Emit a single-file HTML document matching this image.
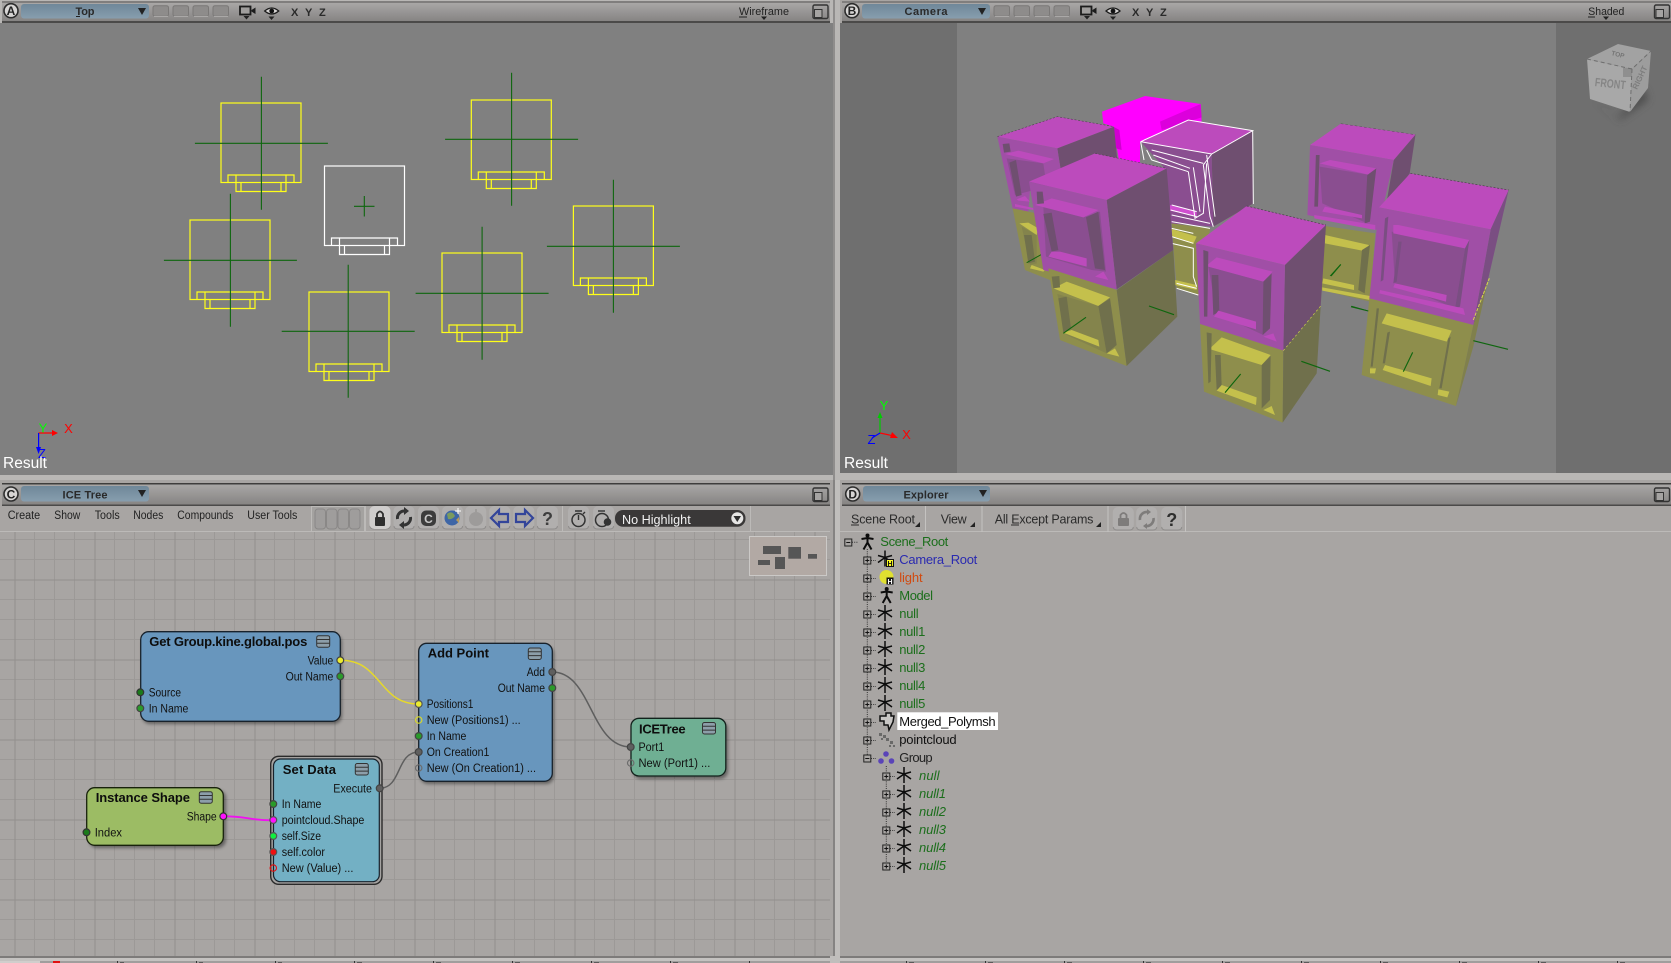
<!DOCTYPE html>
<html><head><meta charset="utf-8"><title>ICE Tree</title>
<style>
html,body{margin:0;padding:0;background:#a8a5a3;overflow:hidden}
svg{display:block}
text{font-family:"Liberation Sans",sans-serif}
.l{font-size:11.5px;fill:#111}
.t{font-size:13px;font-weight:bold;fill:#0d0d0d}
.m{font-size:11.5px;fill:#222}
.b{font-size:11px;font-weight:bold;fill:#2a2a2a}
.e{font-size:12.5px;fill:#2b2b2b}
.tr{font-size:13px}
.g{fill:#1c6e1c}
.i{fill:#1c6e1c;font-style:italic}
.w{stroke:#ffff19;fill:none;stroke-width:1.2}
.wh{stroke:#fff;fill:none;stroke-width:1.2}
.c{stroke:#0e660e;stroke-width:1.1;fill:none}
</style></head><body>
<svg width="1671" height="963" viewBox="0 0 1671 963" xmlns="http://www.w3.org/2000/svg">
<defs>
<linearGradient id="bar" x1="0" y1="0" x2="0" y2="1"><stop offset="0" stop-color="#a9a7a6"/><stop offset="1" stop-color="#868483"/></linearGradient>
<linearGradient id="dd" x1="0" y1="0" x2="0" y2="1"><stop offset="0" stop-color="#6f8799"/><stop offset="1" stop-color="#879eae"/></linearGradient>
<pattern id="grid" patternUnits="userSpaceOnUse" x="14.5" y="19.5" width="80" height="80">
<path d="M0 0V80M20 0V80M40 0V80M60 0V80M0 0H80M0 20H80M0 40H80M0 60H80" stroke="#9c9997" stroke-width="1" fill="none"/>
<path d="M.5 0V80M0 .5H80" stroke="#92908e" stroke-width="1" fill="none"/>
</pattern>
<filter id="sh" x="-10%" y="-10%" width="125%" height="125%"><feGaussianBlur stdDeviation="1.5"/></filter>
<filter id="sh2" x="-40%" y="-40%" width="180%" height="180%"><feGaussianBlur stdDeviation="4"/></filter>

<g id="obj" class="w">
<rect x="-40" y="-40" width="80" height="79.5"/>
<path d="M-33 39.5V32H33V39.5M-25 32V48.5H25V32M-20 39.5V48.5M20 39.5V48.5"/>
</g>
<g id="objw" class="wh">
<rect x="-40" y="-40" width="80" height="79.5"/>
<path d="M-33 39.5V32H33V39.5M-25 32V48.5H25V32M-20 39.5V48.5M20 39.5V48.5"/>
</g>
<path id="cross" class="c" d="M0-66.5V66.5M-66.5 0H66.5"/>
<g id="plus"><rect x="-3.5" y="-3.5" width="7" height="7" fill="#a8a5a3" stroke="#222"/><path d="M-2-.0H2M0-2V2" stroke="#111"/></g>
<g id="minus"><rect x="-3.5" y="-3.5" width="7" height="7" fill="#a8a5a3" stroke="#222"/><path d="M-2 0H2" stroke="#111"/></g>
<path id="null" d="M0-8V8M-7 4L0-1L7 4M-7-3L0-1L7-3" stroke="#0c0c0c" stroke-width="1.5" fill="none"/>
<g id="fig"><circle cx="0" cy="-6" r="2" fill="#0c0c0c"/><path d="M0-6V1L-4 8M0 1L4 8M-6-2.5L0-3.5L6-2.5" stroke="#0c0c0c" stroke-width="2" fill="none"/></g>
<g id="menu"><rect x="0" y="0" width="13" height="11.5" rx="2" fill="#8c9ea9" stroke="#333" stroke-width="1"/><path d="M0 3.8H13M0 7.6H13" stroke="#333"/></g>
<g id="slot"><rect x="0" y="0" width="15.5" height="10.5" rx="2" fill="#8e8c8b" stroke="#7a7877"/><path d="M1 10.8H15" stroke="#aaa8a7"/></g>
<g id="max"><rect x="0" y="0" width="15" height="13.5" rx="1.5" fill="none" stroke="#333" stroke-width="1.4"/><rect x="1.5" y="4.5" width="7.5" height="8" fill="#a5a3a2" stroke="#333"/></g>
<g id="cam"><rect x="0" y="0" width="10.5" height="8" fill="#a09e9d" stroke="#1c1c1c" stroke-width="1.8"/><path d="M11.5 3.5L15.5 1V7.5L11.5 5Z" fill="#1c1c1c"/></g>
<g id="eye"><path d="M-7 0Q0-6 7 0Q0 6-7 0Z" fill="#d5d3d2" stroke="#1c1c1c" stroke-width="1.3"/><circle r="2.4" fill="#111"/></g>
<path id="tri" d="M-3 0H3L0 3.5Z" fill="#222"/>
<path id="ddtri" d="M-4 0H4L0 7Z" fill="#222"/>
<g id="tbtn"><rect x="-10.5" y="-12" width="21" height="23" rx="5" fill="#b1afae"/><path d="M-10 8Q-10 11-6 11H6Q10 11 10 8" stroke="#8f8d8c" fill="none"/></g>
</defs>

<rect width="1671" height="963" fill="#a8a5a3"/>

<!-- VIEWPORT A -->
<rect x="0" y="0" width="840" height="480" fill="#b9b7b5"/>
<rect x="0" y="23" width="833" height="452" fill="#808080"/>
<rect x="833" y="0" width="2" height="480" fill="#8f8d8c"/>
<rect x="2" y="1" width="828" height="2" fill="#807e7d"/>
<rect x="2" y="3" width="828" height="18" fill="url(#bar)"/>
<rect x="2" y="21" width="828" height="2" fill="#4b4a49"/>
<rect x="21" y="4" width="128" height="14.5" rx="3" fill="url(#dd)"/>
<circle cx="11" cy="10.7" r="7" fill="#d7d5d4" stroke="#2d2d2d" stroke-width="1.6"/>
<text x="11" y="15" text-anchor="middle" style="font-size:12px;font-weight:bold;fill:#222">A</text>
<text x="85" y="15" text-anchor="middle" class="b" textLength="19">Top</text>
<path d="M76 16.5H80" stroke="#222"/>
<use href="#ddtri" x="142" y="8"/>
<use href="#slot" x="153" y="5.7"/><use href="#slot" x="173" y="5.7"/><use href="#slot" x="193" y="5.7"/><use href="#slot" x="213" y="5.7"/>
<use href="#cam" x="240" y="6.5"/><use href="#tri" x="246.5" y="16"/>
<use href="#eye" x="271.7" y="11"/><use href="#tri" x="271.5" y="16.5"/>
<text x="291" y="16" class="b">X</text><text x="305" y="16" class="b">Y</text><text x="319" y="16" class="b">Z</text>
<text x="739" y="15" textLength="50" lengthAdjust="spacingAndGlyphs" style="font-size:11px;fill:#222">Wireframe</text>
<path d="M739 17H747" stroke="#222"/>
<use href="#tri" x="764" y="16.5"/>
<use href="#max" x="813" y="5"/>

<!-- wireframes -->
<g>
<use href="#obj" x="261" y="143"/><use href="#cross" x="261.4" y="143.3"/>
<use href="#obj" x="511.3" y="140"/><use href="#cross" x="511.6" y="139.3"/>
<use href="#obj" x="230" y="260"/><use href="#cross" x="230.4" y="260.3"/>
<use href="#objw" x="364.5" y="206"/>
<path class="c" d="M364.3 196V216.5M354 206.3H374.5"/>
<use href="#obj" x="349" y="332"/><use href="#cross" x="348.2" y="331.3"/>
<use href="#obj" x="482" y="293"/><use href="#cross" x="482.1" y="293.3"/>
<use href="#obj" x="613.4" y="246"/><use href="#cross" x="613.4" y="246.3"/>
</g>
<!-- axis A -->
<path d="M38.6 433H55" stroke="#f00" stroke-width="1.2"/><path d="M52 430L58 433L52 436Z" fill="#f00"/>
<path d="M38.6 433V450" stroke="#00f" stroke-width="1.2"/><path d="M36 447H41L38.6 454Z" fill="#00f"/>
<text x="43" y="432.5" text-anchor="middle" style="font-size:13px;fill:#0f0">Y</text>
<text x="68.5" y="433" text-anchor="middle" style="font-size:13px;fill:#f00">X</text>
<text x="42" y="458" text-anchor="middle" style="font-size:13px;fill:#00f">Z</text>
<text x="3" y="468" textLength="44" lengthAdjust="spacingAndGlyphs" style="font-size:15.5px;fill:#fff">Result</text>

<!-- VIEWPORT B -->
<rect x="835" y="0" width="5" height="480" fill="#b9b7b5"/>
<rect x="840" y="23" width="831" height="450" fill="#6f6f6f"/>
<rect x="957" y="23" width="599" height="450" fill="#808080"/>
<rect x="840" y="473" width="831" height="7" fill="#b9b7b5"/>
<rect x="842" y="1" width="829" height="2" fill="#807e7d"/>
<rect x="842" y="3" width="829" height="18" fill="url(#bar)"/>
<rect x="842" y="21" width="829" height="2" fill="#4b4a49"/>
<rect x="862" y="4" width="128" height="14.5" rx="3" fill="url(#dd)"/>
<circle cx="852" cy="10.7" r="7" fill="#d7d5d4" stroke="#2d2d2d" stroke-width="1.6"/>
<text x="852" y="15" text-anchor="middle" style="font-size:12px;font-weight:bold;fill:#222">B</text>
<text x="926" y="15" text-anchor="middle" class="b" textLength="43">Camera</text>
<use href="#ddtri" x="982" y="8"/>
<use href="#slot" x="994" y="5.7"/><use href="#slot" x="1014" y="5.7"/><use href="#slot" x="1034" y="5.7"/><use href="#slot" x="1054" y="5.7"/>
<use href="#cam" x="1081" y="6.5"/><use href="#tri" x="1087" y="16"/>
<use href="#eye" x="1113" y="11"/><use href="#tri" x="1113" y="16.5"/>
<text x="1132" y="16" class="b">X</text><text x="1146" y="16" class="b">Y</text><text x="1160" y="16" class="b">Z</text>
<text x="1588.3" y="15" textLength="36" lengthAdjust="spacingAndGlyphs" style="font-size:11px;fill:#222">Shaded</text>
<path d="M1588 17H1595" stroke="#222"/>
<use href="#tri" x="1606" y="16.5"/>
<use href="#max" x="1654.5" y="5"/>

<!-- back blocks, zoom-7 coordinates -->
<g transform="translate(980 80) scale(.33333)">
<polygon points="366,95 495,48 662,72 665,130 560,160 530,190 480,185 480,260 420,260 400,140 370,130" fill="#ff00ff"/>
<polygon points="540,125 662,72 665,112 545,150" fill="#dc00dc"/>
<polygon points="400,140 418,150 425,210 408,205" fill="#d000d0"/>
<!-- block 1 -->
<polygon points="52,170 232,110 402,140 232,205" fill="#bc4bbc"/>
<polygon points="232,205 402,140 412,240 250,320" fill="#6f4f70"/>
<polygon points="52,170 232,205 250,320 150,330 145,395 98,385" fill="#a04fa6"/>
<polygon points="80,235 190,250 200,320 105,345" fill="#8a4e90"/>
<polygon points="75,222 115,212 222,237 190,250" fill="#bc4bbc"/>
<polygon points="88,248 108,240 125,345 108,350" fill="#6f4f70"/>
<polygon points="68,192 88,190 92,215 72,218" fill="#6f4f70"/>
<polygon points="110,358 135,348 150,365 115,362" fill="#bc4bbc"/>
<polygon points="105,372 160,384 160,390 105,380" fill="#bc4bbc"/>
<polygon points="98,385 170,400 222,605 135,570" fill="#8e8e4c"/>
<polygon points="125,440 170,465 170,550 150,555" fill="#84844c"/>
<polygon points="118,430 145,428 175,445 170,465" fill="#c4c04c"/>
<polygon points="132,465 155,465 165,545 145,550" fill="#70704c"/>
<polygon points="155,555 195,570 190,575 150,565" fill="#c4c04c"/>
<path d="M140 548L187 522" stroke="#0e660e" stroke-width="3" fill="none"/>
</g>

<!-- block 3 -->
<g transform="translate(840 0) scale(.52994 .33333)">
<polygon points="887,435 945,371 1086,404 1045,480" fill="#bc4bbc"/>
<polygon points="1045,480 1086,404 1075,520 1030,620" fill="#6f4f70"/>
<polygon points="887,435 1045,480 1015,690 882,645" fill="#a04fa6"/>
<polygon points="905,500 1000,525 995,670 910,610" fill="#8a4e90"/>
<polygon points="905,490 925,480 1012,505 1000,525" fill="#bc4bbc"/>
<polygon points="995,525 1012,505 1000,665 990,670" fill="#6f4f70"/>
<polygon points="898,465 905,465 902,620 895,620" fill="#6f4f70"/>
<polygon points="915,620 985,645 985,655 910,635" fill="#bc4bbc"/>
<polygon points="895,645 1010,675 1010,690 895,655" fill="#bc4bbc"/>
<polygon points="915,678 1010,700 1000,905 908,870" fill="#8e8e4c"/>
<polygon points="915,705 998,735 995,755 915,730" fill="#c4c04c"/>
<polygon points="985,750 1000,735 990,880 978,870" fill="#70704c"/>
<polygon points="912,835 970,855 970,870 910,850" fill="#c4c04c"/>
<polygon points="910,862 1000,888 1000,900 910,872" fill="#c4c04c"/>
<path d="M925 828L945 793M965 918L995 932" stroke="#0e660e" stroke-width="2" fill="none"/>
<path d="M945 371L1086 404" stroke="#444" stroke-dasharray="5 4" fill="none"/>
</g>

<g transform="translate(980 80) scale(.33333)">
<polygon points="482,185 625,120 818,152 695,222" fill="#bc4bbc"/>
<polygon points="695,222 818,152 820,370 700,440" fill="#6f4f70"/>
<polygon points="482,185 695,222 700,440 570,430 550,260" fill="#8a4e90"/>
<polygon points="570,375 650,395 650,410 570,392" fill="#d04ed0"/>
<polygon points="575,430 690,445 665,650 590,625" fill="#8e8e4c"/>
<polygon points="575,447 650,470 640,492 575,470" fill="#c4c04c"/>
<polygon points="585,600 650,615 650,630 585,615" fill="#c4c04c"/>
<g class="wh" style="stroke-width:3">
<path d="M482 185L625 120L818 152L695 222L482 185"/>
<path d="M818 152L820 372M482 185L492 240"/>
<path d="M500 210L515 240M515 210L670 250M520 225L630 265M515 240L625 275"/>
<path d="M625 275L645 415L670 400L680 250M640 262L660 395"/>
<path d="M695 222L670 255L690 410L700 440M680 225L705 410"/>
<path d="M575 375L650 395M572 390L650 410M575 405L690 430"/>
<path d="M575 425L690 445M575 445L640 460M575 470L640 490M575 490L640 505L640 590L650 620M590 610L650 625M590 625L655 645"/>
</g>
<!-- block 2 upper -->
<polygon points="147,305 345,220 560,265 380,360" fill="#bc4bbc"/>
<polygon points="380,360 560,265 580,510 410,628" fill="#6f4f70"/>
<polygon points="147,305 380,360 410,628 190,570" fill="#a04fa6"/>
<polygon points="190,380 310,412 360,395 378,575 335,570 198,530" fill="#8a4e90"/>
<polygon points="165,375 215,355 355,390 310,412" fill="#bc4bbc"/>
<polygon points="190,402 215,398 235,510 215,515" fill="#6f4f70"/>
<polygon points="318,412 355,395 375,570 345,565" fill="#6f4f70"/>
<polygon points="215,515 240,515 320,535 320,560 205,530" fill="#bc4bbc"/>
<polygon points="345,590 370,575 385,600" fill="#bc4bbc"/>
<polygon points="170,335 188,335 192,370 172,372" fill="#6f4f70"/>
<path d="M52 170L232 110L402 140M345 220L560 265" stroke="#444" stroke-width="1.6" stroke-dasharray="6 5" fill="none"/>
</g>

<!-- lower & front blocks, zoom-8 coordinates -->
<g transform="translate(1000 200) scale(.33333)">
<polygon points="145,205 350,270 380,498 180,420" fill="#8e8e4c"/>
<polygon points="350,270 520,150 532,350 380,498" fill="#70704c"/>
<polygon points="172,282 295,318 320,460 200,405" fill="#84844c"/>
<polygon points="160,265 200,245 330,292 295,318" fill="#c4c04c"/>
<polygon points="175,295 200,290 213,385 190,398" fill="#70704c"/>
<polygon points="295,318 330,295 350,435 320,460" fill="#70704c"/>
<polygon points="190,398 215,390 295,420 298,440" fill="#c4c04c"/>
<polygon points="320,460 345,445 358,470" fill="#c4c04c"/>
<polygon points="155,230 178,228 180,262 160,265" fill="#70704c"/>
<path d="M190 400L258 352M447 318L522 344" stroke="#0e660e" stroke-width="3.4" fill="none"/>
<!-- block mid -->
<polygon points="588,130 740,18 978,75 855,195" fill="#bc4bbc"/>
<polygon points="855,195 978,75 962,318 850,452" fill="#6f4f70"/>
<polygon points="588,130 855,195 850,452 600,372" fill="#a04fa6"/>
<polygon points="625,200 790,245 790,405 650,340" fill="#8a4e90"/>
<polygon points="618,198 650,172 818,215 790,245" fill="#bc4bbc"/>
<polygon points="635,225 655,225 658,335 640,345" fill="#6f4f70"/>
<polygon points="790,245 815,220 810,385 788,405" fill="#6f4f70"/>
<polygon points="655,332 768,365 768,388 642,350" fill="#bc4bbc"/>
<polygon points="790,410 820,400 830,425" fill="#bc4bbc"/>
<polygon points="610,150 625,155 622,350 612,350" fill="#6f4f70"/>
<polygon points="600,372 850,452 848,668 612,575" fill="#8e8e4c"/>
<polygon points="850,452 962,318 950,520 848,668" fill="#70704c"/>
<polygon points="628,447 665,412 812,465 785,495" fill="#c4c04c"/>
<polygon points="645,465 662,465 665,560 650,570" fill="#70704c"/>
<polygon points="785,495 812,468 810,600 785,625" fill="#70704c"/>
<polygon points="665,555 770,592 768,615 650,572" fill="#c4c04c"/>
<polygon points="790,630 815,618 825,645" fill="#c4c04c"/>
<polygon points="620,397 635,400 632,545 625,550" fill="#70704c"/>
<path d="M850 452L962 318" stroke="#d8d84c" stroke-width="2" stroke-dasharray="6 8"/>
<path d="M675 578L722 522M904 484L990 514" stroke="#0e660e" stroke-width="3.4" fill="none"/>
<path d="M740 18L978 75" stroke="#444" stroke-width="2" stroke-dasharray="6 5"/>
<!-- block 5 -->
<polygon points="1137,22 1231,-80 1526,-30 1472,88" fill="#bc4bbc"/>
<polygon points="1472,88 1526,-30 1465,235 1420,375" fill="#7a4e82"/>
<polygon points="1137,22 1472,88 1420,375 1108,295" fill="#a04fa6"/>
<polygon points="1175,95 1395,145 1365,325 1185,250" fill="#8a4e90"/>
<polygon points="1180,75 1195,75 1408,120 1395,145 1180,100" fill="#bc4bbc"/>
<polygon points="1395,145 1408,120 1380,320 1365,325" fill="#7a4e82"/>
<polygon points="1195,125 1205,125 1190,245 1180,250" fill="#7a4e82"/>
<polygon points="1185,250 1340,285 1338,305 1180,262" fill="#bc4bbc"/>
<polygon points="1140,270 1390,325 1395,345 1138,280" fill="#bc4bbc"/>
<polygon points="1155,55 1165,50 1150,240 1142,245" fill="#7a4e82"/>
<polygon points="1108,295 1420,375 1368,618 1085,525" fill="#8e8e4c"/>
<polygon points="1420,375 1465,235 1420,440 1368,618" fill="#80804c"/>
<path d="M1420 360L1468 235" stroke="#d8d84c" stroke-width="3" stroke-dasharray="10 4"/>
<polygon points="1160,340 1355,392 1340,425 1145,370" fill="#c4c04c"/>
<polygon points="1155,495 1295,535 1292,558 1148,510" fill="#c4c04c"/>
<polygon points="1110,505 1128,505 1125,520 1110,520" fill="#c4c04c"/>
<polygon points="1315,568 1348,575 1342,592 1313,585" fill="#c4c04c"/>
<polygon points="1130,325 1137,325 1118,500 1112,500" fill="#70704c"/>
<polygon points="1162,398 1170,395 1155,490 1148,490" fill="#70704c"/>
<polygon points="1345,415 1352,410 1325,565 1318,565" fill="#70704c"/>
<path d="M1210 515L1238 457M1420 422L1524 448M1053 320L1105 333M993 228L1022 194" stroke="#0e660e" stroke-width="3.4" fill="none"/>
<path d="M1231 -80L1526 -30" stroke="#444" stroke-width="2" stroke-dasharray="6 5"/>
</g>

<!-- axis B -->
<path d="M880 433V414" stroke="#0c0" stroke-width="1.2"/><path d="M877.5 418H882.5L880 412Z" fill="#0c0"/>
<path d="M880 433L894 436" stroke="#f00" stroke-width="1.2"/><path d="M892 432L898 438L890 438Z" fill="#f00"/>
<path d="M880 433L872 438" stroke="#00f" stroke-width="1.2"/>
<text x="884" y="410" text-anchor="middle" style="font-size:13px;fill:#0f0">Y</text>
<text x="906.5" y="439" text-anchor="middle" style="font-size:13px;fill:#f00">X</text>
<text x="871.5" y="444" text-anchor="middle" style="font-size:13px;fill:#00f">Z</text>
<text x="844" y="468" textLength="44" lengthAdjust="spacingAndGlyphs" style="font-size:15.5px;fill:#fff">Result</text>

<!-- nav cube -->
<polygon points="1590,100 1618,118 1644,88 1648,100 1620,120" fill="#4e4e4e" filter="url(#sh2)"/>
<polygon points="1587,59 1618,44 1651,51 1632,69" fill="#a2a2a2"/>
<polygon points="1587,59 1632,69 1630,112 1590,99" fill="#a8a8a8"/>
<polygon points="1632,69 1651,51 1648,88 1630,112" fill="#9d9d9d"/>
<rect x="1623" y="68" width="9" height="9" fill="#8f8f8f"/>
<path d="M1587 59L1632 69L1651 51M1632 69L1630 112" stroke="#6d6d6d" stroke-dasharray="4 3" fill="none"/>
<text x="1594.5" y="86" transform="rotate(6 1594.5 86)" textLength="31" lengthAdjust="spacingAndGlyphs" style="font-size:12px;font-weight:bold;fill:#858585">FRONT</text>
<text x="1611" y="55" transform="rotate(14 1611 55)" style="font-size:6.5px;font-weight:bold;fill:#757575">TOP</text>
<text x="1637" y="90" transform="rotate(-65 1637 90)" style="font-size:8px;font-weight:bold;fill:#7d7d7d">RIGHT</text>

<!-- ICE PANEL -->
<rect x="0" y="480" width="840" height="483" fill="#a8a5a3"/>
<rect x="2" y="483" width="828" height="1.5" fill="#3e3d3c"/>
<rect x="2" y="484.5" width="828" height="20" fill="url(#bar)"/>
<rect x="2" y="504.5" width="828" height="1.5" fill="#4b4a49"/>
<rect x="21" y="486" width="128" height="15.5" rx="3" fill="url(#dd)"/>
<circle cx="11" cy="494" r="7" fill="#d7d5d4" stroke="#2d2d2d" stroke-width="1.6"/>
<text x="11" y="498.5" text-anchor="middle" style="font-size:12px;font-weight:bold;fill:#222">C</text>
<text x="85" y="498.5" text-anchor="middle" class="b" textLength="45">ICE Tree</text>
<use href="#ddtri" x="142" y="490"/>
<use href="#max" x="813" y="488"/>
<rect x="0" y="532" width="830" height="424" fill="url(#grid)"/>
<rect x="0" y="506" width="830" height="26" fill="#a8a5a3"/>
<path d="M0 531.5H830" stroke="#bcbab8"/>
<text x="7.7" y="519" class="m" lengthAdjust="spacingAndGlyphs" textLength="32.5">Create</text>
<text x="54.3" y="519" class="m" lengthAdjust="spacingAndGlyphs" textLength="26">Show</text>
<text x="94.7" y="519" class="m" lengthAdjust="spacingAndGlyphs" textLength="25">Tools</text>
<text x="133.3" y="519" class="m" lengthAdjust="spacingAndGlyphs" textLength="30">Nodes</text>
<text x="177.3" y="519" class="m" lengthAdjust="spacingAndGlyphs" textLength="56">Compounds</text>
<text x="247.3" y="519" class="m" lengthAdjust="spacingAndGlyphs" textLength="50">User Tools</text>
<rect x="311.5" y="506.5" width="53" height="25" fill="#a4a2a0" stroke="#bcbab8"/>
<g fill="#9f9d9c" stroke="#8a8887"><rect x="315" y="509" width="10.5" height="20" rx="3"/><rect x="326.5" y="509" width="10.5" height="20" rx="3"/><rect x="338" y="509" width="10.5" height="20" rx="3"/><rect x="349.5" y="509" width="10.5" height="20" rx="3"/></g>
<path d="M365.5 506V532M562.5 506V532M750.5 506V532" stroke="#bcbab8"/>
<!-- tool buttons -->
<use href="#tbtn" x="380" y="518"/>
<rect x="369.5" y="506" width="21" height="23" rx="5" fill="#cfcdcc"/>
<rect x="375" y="517" width="10" height="9" rx="1" fill="#2e2e2e"/><path d="M377 517V514Q380 509 383 514V517" fill="none" stroke="#2e2e2e" stroke-width="1.8"/>
<use href="#tbtn" x="404" y="518"/>
<path d="M397.5 519A7 7 0 0 1 405 511M410.5 517A7 7 0 0 1 403 525" stroke="#333" stroke-width="3" fill="none"/><path d="M404 507L409 511L404 515ZM404 521L399 525L404 529Z" fill="#333"/>
<use href="#tbtn" x="428.5" y="518"/>
<rect x="421" y="510.5" width="15" height="15.5" rx="5" fill="#3c3c3c"/>
<text x="428.5" y="523" text-anchor="middle" style="font-size:12px;font-weight:bold;fill:#c8c8c8">C</text>
<use href="#tbtn" x="452.6" y="518"/>
<circle cx="452" cy="518" r="7.5" fill="#3e66a6"/><path d="M447 514Q452 510 455 516Q452 520 448 519Z" fill="#7b9b5e"/><path d="M456 520L459 517L459 523Z" fill="#b89a58"/><path d="M458 508V514M455 511H461" stroke="#fff"/>
<use href="#tbtn" x="475.7" y="518"/>
<circle cx="476" cy="519" r="7" fill="#9d9b9a"/><path d="M476 512V509" stroke="#8a8887"/>
<use href="#tbtn" x="499.8" y="518"/>
<path d="M491 518L499 510V514H508V522H499V526Z" fill="#a8a5a3" stroke="#33459a" stroke-width="2.2"/>
<use href="#tbtn" x="523.8" y="518"/>
<path d="M533 518L525 510V514H516V522H525V526Z" fill="#a8a5a3" stroke="#33459a" stroke-width="2.2"/>
<use href="#tbtn" x="547.4" y="518"/>
<text x="547.5" y="525" text-anchor="middle" style="font-size:18px;font-weight:bold;fill:#3e3e3e">?</text>
<use href="#tbtn" x="578.5" y="518"/>
<circle cx="578.5" cy="520" r="6.5" fill="none" stroke="#333" stroke-width="1.5"/><path d="M578.5 520V515M575 511H582M585 512L583 514" stroke="#333" stroke-width="1.4"/>
<use href="#tbtn" x="603.6" y="518"/>
<circle cx="602" cy="520" r="6.5" fill="none" stroke="#333" stroke-width="1.5"/><path d="M598 511H605" stroke="#333" stroke-width="1.4"/><circle cx="607.5" cy="522" r="3.8" fill="#333"/>
<rect x="615" y="510" width="130.5" height="16.7" rx="8" fill="#3a3838"/>
<text x="622" y="524" textLength="68.7" lengthAdjust="spacingAndGlyphs" style="font-size:12.5px;fill:#f2f2f2">No Highlight</text>
<circle cx="737.3" cy="518.3" r="6" fill="#e6e5e4"/><path d="M733.5 516H741L737.3 522Z" fill="#2e2e2e"/>
<!-- minimap -->
<rect x="749.5" y="536.5" width="77" height="39" fill="#b2a9a4" stroke="#cbc9c7"/>
<g fill="#565656"><rect x="763" y="546" width="18" height="8"/><rect x="788.3" y="547" width="12.7" height="11.7"/><rect x="808" y="554" width="9" height="4.7"/><rect x="758" y="560" width="12" height="5"/><rect x="775" y="557" width="10" height="12"/></g>

<!-- nodes -->
<g fill="#000" opacity=".4" filter="url(#sh)">
<rect x="142" y="634" width="200" height="90" rx="8"/><rect x="420" y="646" width="134" height="138" rx="8"/>
<rect x="633" y="721" width="95" height="58" rx="8"/><rect x="89" y="790" width="137" height="58" rx="8"/>
</g>
<path d="M340.3 660.3C382 660 378 704 418.7 704" fill="none" stroke="#e6d92a" stroke-width="1.5"/>
<path d="M552.3 672C592 672 590 747 630.7 747" fill="none" stroke="#5e5e5e" stroke-width="1.5"/>
<path d="M379.7 788.3C402 788 396 752 418.7 752" fill="none" stroke="#5e5e5e" stroke-width="1.5"/>
<path d="M223.3 816.3C250 816.3 246 820.3 273.3 820.3" fill="none" stroke="#f010f0" stroke-width="1.8"/>

<rect x="140.7" y="631.7" width="199.6" height="89.6" rx="8" fill="#6896bd" stroke="#18222c" stroke-width="1.3"/>
<text x="149.3" y="646" class="t" textLength="158">Get Group.kine.global.pos</text>
<use href="#menu" x="316.7" y="635.7"/>
<text x="333.3" y="664.3" class="l" text-anchor="end" lengthAdjust="spacingAndGlyphs" textLength="25.7">Value</text>
<text x="333.3" y="680.3" class="l" text-anchor="end" lengthAdjust="spacingAndGlyphs" textLength="47.7">Out Name</text>
<text x="148.7" y="696.3" class="l" lengthAdjust="spacingAndGlyphs" textLength="32.3">Source</text>
<text x="148.7" y="712.3" class="l" lengthAdjust="spacingAndGlyphs" textLength="39.7">In Name</text>

<rect x="418.7" y="643.3" width="133.6" height="138" rx="8" fill="#6896bd" stroke="#18222c" stroke-width="1.3"/>
<text x="427.7" y="657.7" class="t" textLength="61.3">Add Point</text>
<use href="#menu" x="528.3" y="648"/>
<text x="545" y="676" class="l" text-anchor="end" lengthAdjust="spacingAndGlyphs" textLength="18.3">Add</text>
<text x="545" y="692" class="l" text-anchor="end" lengthAdjust="spacingAndGlyphs" textLength="47.3">Out Name</text>
<text x="426.7" y="708" class="l" lengthAdjust="spacingAndGlyphs" textLength="46.7">Positions1</text>
<text x="426.7" y="724" class="l" lengthAdjust="spacingAndGlyphs" textLength="94">New (Positions1) ...</text>
<text x="426.7" y="740" class="l" lengthAdjust="spacingAndGlyphs" textLength="39.7">In Name</text>
<text x="426.7" y="756" class="l" lengthAdjust="spacingAndGlyphs" textLength="62.7">On Creation1</text>
<text x="426.7" y="772" class="l" lengthAdjust="spacingAndGlyphs" textLength="109.3">New (On Creation1) ...</text>

<rect x="270.7" y="756.3" width="111.3" height="128" rx="8" fill="#a4a2a0" stroke="#2a2a2a" stroke-width="1.4"/>
<rect x="273.5" y="759" width="105.8" height="122.7" rx="7" fill="#73b0c4" stroke="#18222c" stroke-width="1.2"/>
<text x="282.7" y="774" class="t" textLength="53.3">Set Data</text>
<use href="#menu" x="355.3" y="763.5"/>
<text x="372" y="792.3" class="l" text-anchor="end" lengthAdjust="spacingAndGlyphs" textLength="38.7">Execute</text>
<text x="281.7" y="808" class="l" lengthAdjust="spacingAndGlyphs" textLength="39.7">In Name</text>
<text x="281.7" y="824" class="l" lengthAdjust="spacingAndGlyphs" textLength="82.7">pointcloud.Shape</text>
<text x="281.7" y="840" class="l" lengthAdjust="spacingAndGlyphs" textLength="39.3">self.Size</text>
<text x="281.7" y="856" class="l" lengthAdjust="spacingAndGlyphs" textLength="43.3">self.color</text>
<text x="281.7" y="872" class="l" lengthAdjust="spacingAndGlyphs" textLength="71.7">New (Value) ...</text>

<rect x="86.7" y="787.7" width="136.6" height="57.6" rx="8" fill="#9cbc64" stroke="#18220c" stroke-width="1.3"/>
<text x="95.7" y="802" class="t" textLength="94.3">Instance Shape</text>
<use href="#menu" x="199.3" y="791.7"/>
<text x="216.7" y="820.3" class="l" text-anchor="end" lengthAdjust="spacingAndGlyphs" textLength="30">Shape</text>
<text x="94.7" y="836.3" class="l" lengthAdjust="spacingAndGlyphs" textLength="27.3">Index</text>

<rect x="631" y="718.3" width="94.8" height="57.7" rx="8" fill="#6faf93" stroke="#12221c" stroke-width="1.3"/>
<text x="639" y="733.3" class="t" textLength="46.6">ICETree</text>
<use href="#menu" x="702.5" y="722.5"/>
<text x="638.5" y="751" class="l" lengthAdjust="spacingAndGlyphs" textLength="25.7">Port1</text>
<text x="638.5" y="767" class="l" lengthAdjust="spacingAndGlyphs" textLength="71.8">New (Port1) ...</text>

<!-- ports -->
<g stroke-width="1.2">
<circle cx="340.3" cy="660.3" r="3.4" fill="#ecec30" stroke="#444"/>
<circle cx="340.3" cy="676.3" r="3.4" fill="#2a9a2a" stroke="#444"/>
<circle cx="140.3" cy="692.3" r="3.4" fill="#1a7a1a" stroke="#333"/>
<circle cx="140.3" cy="708.3" r="3.4" fill="#2a9a2a" stroke="#444"/>
<circle cx="552.3" cy="672" r="3.4" fill="#5f5f5f" stroke="#444"/>
<circle cx="552.3" cy="688" r="3.4" fill="#2a9a2a" stroke="#444"/>
<circle cx="418.7" cy="704" r="3.4" fill="#ecec30" stroke="#555"/>
<circle cx="418.7" cy="720" r="3.2" fill="none" stroke="#d8d82a"/>
<circle cx="418.7" cy="736" r="3.4" fill="#2a9a2a" stroke="#444"/>
<circle cx="418.7" cy="752" r="3.4" fill="#5f5f5f" stroke="#444"/>
<circle cx="418.7" cy="768" r="3.2" fill="none" stroke="#6c6c6c"/>
<circle cx="379.7" cy="788.3" r="3.4" fill="#5f5f5f" stroke="#444"/>
<circle cx="273.3" cy="804" r="3.4" fill="#2a9a2a" stroke="#444"/>
<circle cx="273.3" cy="820" r="3.4" fill="#ff10ff" stroke="#555"/>
<circle cx="273.3" cy="836" r="3.4" fill="#10f040" stroke="#555"/>
<circle cx="273.3" cy="852" r="3.4" fill="#f01010" stroke="#555"/>
<circle cx="273.3" cy="868" r="3.2" fill="none" stroke="#e01515"/>
<circle cx="223.3" cy="816.3" r="3.4" fill="#ff10ff" stroke="#333"/>
<circle cx="86.5" cy="832.3" r="3.4" fill="#1a7a1a" stroke="#333"/>
<circle cx="630.7" cy="747" r="3.4" fill="#5f5f5f" stroke="#444"/>
<circle cx="630.7" cy="763" r="3.2" fill="none" stroke="#6c6c6c"/>
</g>

<!-- divider between lower panels -->
<rect x="830" y="480" width="3" height="483" fill="#a8a5a3"/>
<rect x="833" y="480" width="2" height="483" fill="#858382"/>
<rect x="835" y="480" width="5" height="483" fill="#c0bebc"/>

<!-- EXPLORER PANEL -->
<rect x="842" y="483" width="829" height="1.5" fill="#3e3d3c"/>
<rect x="842" y="484.5" width="829" height="20" fill="url(#bar)"/>
<rect x="842" y="504.5" width="829" height="1.5" fill="#4b4a49"/>
<rect x="863" y="486" width="127" height="15.5" rx="3" fill="url(#dd)"/>
<circle cx="852.7" cy="494" r="7" fill="#d7d5d4" stroke="#2d2d2d" stroke-width="1.6"/>
<text x="852.7" y="498.5" text-anchor="middle" style="font-size:12px;font-weight:bold;fill:#222">D</text>
<text x="926" y="498.5" text-anchor="middle" class="b" textLength="45">Explorer</text>
<use href="#ddtri" x="983" y="490"/>
<use href="#max" x="1654.5" y="488"/>
<rect x="840" y="506" width="831" height="26" fill="#a8a5a3"/>
<path d="M840 531.5H1671" stroke="#bcbab8"/>
<path d="M925.5 506V532M982 506V532M1108 506V532M1185.5 506V532" stroke="#c4c2c0"/>
<text x="851" y="523.3" class="e" textLength="64">Scene Root</text>
<path d="M851 525H859" stroke="#2b2b2b"/>
<path d="M920 522V527H915Z" fill="#222"/>
<text x="940.7" y="523.3" class="e" textLength="26">View</text>
<path d="M975 522V527H970Z" fill="#222"/>
<text x="994.7" y="523.3" class="e" textLength="98.7">All Except Params</text>
<path d="M1011 525H1019" stroke="#2b2b2b"/>
<path d="M1101 522V527H1096Z" fill="#222"/>
<use href="#tbtn" x="1123.3" y="519"/>
<rect x="1118" y="518" width="11" height="8" rx="1" fill="#7e7c7b"/><path d="M1120.5 518V515Q1123.5 511 1126.5 515V518" fill="none" stroke="#7e7c7b" stroke-width="1.8"/>
<use href="#tbtn" x="1146.7" y="519"/>
<path d="M1140 520A7 7 0 0 1 1148 512M1153.5 518A7 7 0 0 1 1146 526" stroke="#7e7c7b" stroke-width="2.6" fill="none"/><path d="M1147 509L1151 512L1147 515ZM1147 523L1143 526L1147 529Z" fill="#7e7c7b"/>
<use href="#tbtn" x="1171.7" y="519"/>
<text x="1171.7" y="526" text-anchor="middle" style="font-size:18px;font-weight:bold;fill:#2e2e2e">?</text>

<!-- tree lines -->
<g stroke="#333" stroke-dasharray="1 1.2" fill="none">
<path d="M852 542.3H858"/>
<path d="M867.3 549V755M871 560.5H876M871 578.5H876M871 596.5H876M871 614.5H876M871 632.5H876M871 650.5H876M871 668.5H876M871 686.5H876M871 704.5H876M871 722.5H876M871 740.5H876M871 758.5H876"/>
<path d="M886.3 766V863M890 776.5H895M890 794.5H895M890 812.5H895M890 830.5H895M890 848.5H895M890 866.5H895"/>
</g>
<rect x="897.3" y="712.3" width="100.7" height="17.7" fill="#fff"/>
<use href="#minus" x="848.3" y="542.5"/>
<use href="#plus" x="867.3" y="560.5"/><use href="#plus" x="867.3" y="578.5"/><use href="#plus" x="867.3" y="596.5"/><use href="#plus" x="867.3" y="614.5"/><use href="#plus" x="867.3" y="632.5"/><use href="#plus" x="867.3" y="650.5"/><use href="#plus" x="867.3" y="668.5"/><use href="#plus" x="867.3" y="686.5"/><use href="#plus" x="867.3" y="704.5"/><use href="#plus" x="867.3" y="722.5"/><use href="#plus" x="867.3" y="740.5"/>
<use href="#minus" x="867.3" y="758.5"/>
<use href="#plus" x="886.3" y="776.5"/><use href="#plus" x="886.3" y="794.5"/><use href="#plus" x="886.3" y="812.5"/><use href="#plus" x="886.3" y="830.5"/><use href="#plus" x="886.3" y="848.5"/><use href="#plus" x="886.3" y="866.5"/>

<use href="#fig" x="867.5" y="541.5"/>
<use href="#null" x="885" y="558.5"/><rect x="886.5" y="559.5" width="7" height="7" fill="#ffff20" stroke="#111"/><text x="890" y="566" text-anchor="middle" style="font-size:7px;font-weight:bold;fill:#111">H</text>
<circle cx="886.5" cy="577" r="7" fill="#e0e030"/><rect x="886.5" y="577.5" width="7" height="7" fill="#111"/><text x="890" y="584" text-anchor="middle" style="font-size:7px;font-weight:bold;fill:#fff">H</text>
<use href="#fig" x="886.7" y="595"/>
<use href="#null" x="885" y="613"/><use href="#null" x="885" y="631"/><use href="#null" x="885" y="649"/><use href="#null" x="885" y="667"/><use href="#null" x="885" y="685"/><use href="#null" x="885" y="703"/>
<path d="M880 716H886V713H891V716H894L893 722L889 730L888 725H884V721H880Z" fill="#c9c7c5" stroke="#111" stroke-width="1.5"/>
<g fill="#555" opacity=".75"><rect x="879" y="733" width="3" height="3"/><rect x="883" y="735" width="3" height="3"/><rect x="886" y="738" width="3" height="3"/><rect x="890" y="741" width="3" height="3"/><rect x="881" y="738" width="2" height="2"/><rect x="889" y="745" width="2" height="2"/><rect x="893" y="745" width="2" height="2"/></g>
<g fill="#5a44b8"><circle cx="886" cy="754" r="2.8"/><circle cx="881" cy="761" r="2.8"/><circle cx="891.5" cy="761" r="2.8"/></g>
<use href="#null" x="904" y="775"/><use href="#null" x="904" y="793"/><use href="#null" x="904" y="811"/><use href="#null" x="904" y="829"/><use href="#null" x="904" y="847"/><use href="#null" x="904" y="865"/>

<g class="tr">
<text x="880.3" y="546" class="tr g" textLength="68">Scene_Root</text>
<text x="899.3" y="564" class="tr" fill="#2a2ab0" textLength="78">Camera_Root</text>
<text x="899.3" y="582" class="tr" fill="#d04a10" textLength="23.3">light</text>
<text x="899.3" y="600" class="tr g" textLength="33.7">Model</text>
<text x="899.3" y="618" class="tr g" textLength="19.3">null</text>
<text x="899.3" y="636" class="tr g" textLength="26">null1</text>
<text x="899.3" y="654" class="tr g" textLength="26">null2</text>
<text x="899.3" y="672" class="tr g" textLength="26">null3</text>
<text x="899.3" y="690" class="tr g" textLength="26">null4</text>
<text x="899.3" y="708" class="tr g" textLength="26">null5</text>
<text x="899.3" y="726" class="tr" fill="#111" textLength="96.3">Merged_Polymsh</text>
<text x="899.3" y="744" class="tr" fill="#111" textLength="57.3">pointcloud</text>
<text x="899.3" y="762" class="tr" fill="#222" textLength="33.3">Group</text>
<text x="919" y="780" class="tr i" textLength="20.5">null</text>
<text x="919" y="798" class="tr i" textLength="27">null1</text>
<text x="919" y="816" class="tr i" textLength="27">null2</text>
<text x="919" y="834" class="tr i" textLength="27">null3</text>
<text x="919" y="852" class="tr i" textLength="27">null4</text>
<text x="919" y="870" class="tr i" textLength="27">null5</text>
</g>

<!-- timeline -->
<rect x="0" y="956" width="1671" height="2" fill="#7d7b7a"/>
<rect x="0" y="958" width="1671" height="3" fill="#c4c2c0"/>
<rect x="0" y="961" width="1671" height="2" fill="#a09e9d"/>
<rect x="0" y="961" width="40" height="2" fill="#d0cecc"/>
<rect x="53" y="961" width="7" height="2" fill="#e01010"/>
<path d="M117.5 961V963M196.5 961V963M275.5 961V963M354.5 961V963M433.5 961V963M512.5 961V963M591.5 961V963M670.5 961V963M749.5 961V963M906.5 961V963M985.5 961V963M1064.5 961V963M1143.5 961V963M1222.5 961V963M1301.5 961V963M1380.5 961V963M1459.5 961V963M1538.5 961V963M1617.5 961V963" stroke="#333"/>
<path d="M120 962.5H124M199 962.5H203M278 962.5H282M357 962.5H362M436 962.5H441M515 962.5H520M594 962.5H599M673 962.5H678M909 962.5H914M988 962.5H993M1067 962.5H1072M1146 962.5H1151M1225 962.5H1230M1304 962.5H1309M1383 962.5H1388M1462 962.5H1467M1541 962.5H1546M1620 962.5H1625" stroke="#5a5a5a"/>
<rect x="830" y="956" width="10" height="7" fill="#c0bebc"/>
</svg>
</body></html>
